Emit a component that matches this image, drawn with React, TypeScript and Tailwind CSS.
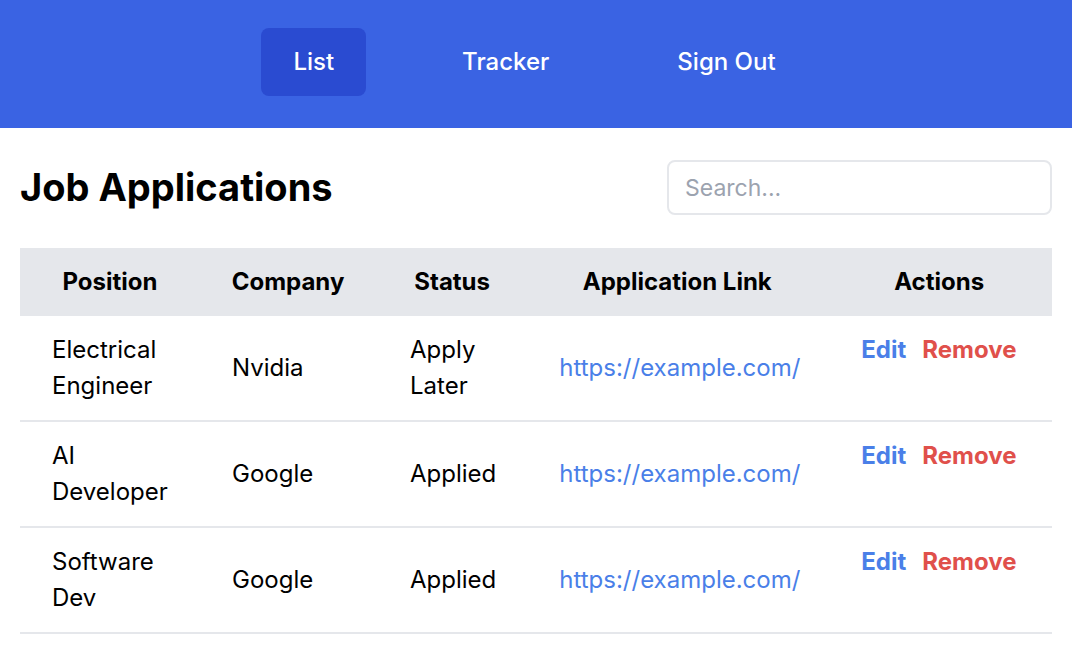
const jobs = [
  { position: 'Electrical Engineer', company: 'Nvidia', status: 'Apply Later', link: 'https://example.com/' },
  { position: 'AI Developer', company: 'Google', status: 'Applied', link: 'https://example.com/' },
  { position: 'Software Dev', company: 'Google', status: 'Applied', link: 'https://example.com/' },
];

const App = () => {
  return (
    <div className="min-h-screen bg-white text-black" style={{ fontFamily: 'Inter, "Noto Sans", sans-serif' }}>
      <nav className="h-[128px] bg-[#3a63e3] flex items-start justify-center gap-16 pt-7 pr-[3px]">
        <a className="px-8 py-[18px] rounded-lg bg-[#2a4bd1] text-white text-[24px] leading-8 font-medium">List</a>
        <a className="px-8 py-[18px] rounded-lg text-white text-[24px] leading-8 font-medium">Tracker</a>
        <a className="px-8 py-[18px] rounded-lg text-white text-[24px] leading-8 font-medium">Sign Out</a>
      </nav>

      <div className="px-5 pt-8">
        <div className="flex items-center justify-between">
          <h1 className="text-[38px] leading-[55px] font-bold">Job Applications</h1>
          <input
            type="text"
            placeholder="Search..."
            className="w-[385px] h-[55px] px-4 border-2 border-[#e5e7eb] rounded-lg text-[23px] placeholder-[#9ca3af] outline-none"
          />
        </div>

        <table className="mt-[33px] w-full border-collapse text-[24px] leading-9">
          <thead>
            <tr className="bg-[#e5e7eb]">
              <th className="w-[180px] py-4 font-bold">Position</th>
              <th className="w-[176px] py-4 font-bold">Company</th>
              <th className="w-[152px] py-4 font-bold">Status</th>
              <th className="w-[298px] py-4 font-bold">Application Link</th>
              <th className="py-4 font-bold">Actions</th>
            </tr>
          </thead>
          <tbody>
            {jobs.map((job, i) => (
              <tr key={i} className="border-b-2 border-[#e5e7eb]">
                <td className="px-8 py-4 align-middle">{job.position}</td>
                <td className="px-8 py-4 align-middle">{job.company}</td>
                <td className="pl-[34px] pr-8 py-4 align-middle">{job.status}</td>
                <td className="pl-[31px] py-4 align-middle">
                  <a href={job.link} className="text-[#4a7fe8]">{job.link}</a>
                </td>
                <td className="pl-[35px] py-4 align-top">
                  <button className="font-bold text-[#4a7fe8] mr-4">Edit</button>
                  <button className="font-bold text-[#e0504b]">Remove</button>
                </td>
              </tr>
            ))}
          </tbody>
        </table>
      </div>
    </div>
  );
};

export default App;
